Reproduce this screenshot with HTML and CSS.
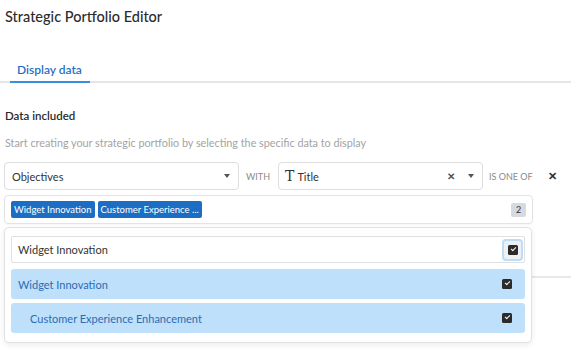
FILE: index.html
```html
<!DOCTYPE html>
<html lang="en">
<head>
    <meta charset="UTF-8">
    <meta name="viewport" content="width=device-width, initial-scale=1.0">
    <title>Strategic Portfolio Editor</title>
    <link rel="stylesheet" href="styles.css">
</head>
<body>
    <div class="page">
        <!-- header -->
        <h1 class="page-title">Strategic Portfolio Editor</h1>

        <!-- tabs -->
        <div class="tabs">
            <div class="tab tab-active">Display data</div>
        </div>

        <!-- data section -->
        <div class="section">
            <h2 class="section-title">Data included</h2>
            <p class="section-desc">Start creating your strategic portfolio by selecting the specific data to display</p>

            <div class="filter">
                <div class="filter-row">
                    <div class="select select-entity">
                        <span class="select-value">Objectives</span>
                        <span class="caret"></span>
                    </div>
                    <span class="op-label">WITH</span>
                    <div class="select select-field">
                        <span class="field-icon">T</span>
                        <span class="select-value">Title</span>
                        <span class="clear">&#x2715;</span>
                        <span class="caret"></span>
                    </div>
                    <span class="op-label op-oneof">IS ONE OF</span>
                    <span class="remove">&#x2715;</span>
                </div>

                <div class="tag-box">
                    <span class="tag">Widget Innovation</span>
                    <span class="tag">Customer Experience ...</span>
                    <span class="count">2</span>
                </div>

                <div class="divider"></div>

                <!-- dropdown -->
                <div class="dropdown">
                    <div class="search">
                        <span class="search-value">Widget Innovation</span>
                        <span class="check-wrap"><span class="check"></span></span>
                    </div>
                    <div class="option">
                        <span>Widget Innovation</span>
                        <span class="check"></span>
                    </div>
                    <div class="option option-child">
                        <span>Customer Experience Enhancement</span>
                        <span class="check"></span>
                    </div>
                </div>
            </div>
        </div>
    </div>
</body>
</html>
```

FILE: styles.css
```css
* {
    margin: 0;
    padding: 0;
    box-sizing: border-box;
}

body {
    background: #ffffff;
    font-family: Lato, 'Open Sans', sans-serif;
    color: #333;
}

.page {
    min-height: 100vh;
    padding-top: 8px;
}

/* header */
.page-title {
    font-size: 14.5px;
    line-height: 18px;
    font-weight: 500;
    padding-left: 5px;
    color: #2c2c2c;
}

/* tabs */
.tabs {
    display: flex;
    margin-top: 36px;
    padding-left: 10px;
    border-bottom: 2px solid #e6e6e6;
}

.tab {
    font-size: 12px;
    line-height: 16px;
    font-weight: 600;
    padding: 0 7px 3px;
    margin-bottom: -2px;
    color: #1f6fc5;
}

.tab-active {
    border-bottom: 2px solid #3b8de0;
    width: 80px;
}

/* section */
.section {
    padding: 0 4px;
}

.section-title {
    font-size: 11.5px;
    line-height: 14px;
    font-weight: 600;
    margin-top: 26px;
    padding-left: 1px;
    color: #2a2a2a;
}

.section-desc {
    font-size: 10.8px;
    line-height: 14px;
    margin-top: 13px;
    padding-left: 1px;
    color: #a3a3a3;
}

.filter {
    position: relative;
    margin-top: 12px;
}

.filter-row {
    display: flex;
    align-items: center;
    height: 28px;
}

.select {
    display: flex;
    align-items: center;
    height: 28px;
    border: 1px solid #dedede;
    border-radius: 4px;
    padding: 0 7px;
    font-size: 11px;
}

.select-entity {
    width: 235px;
}

.select-field {
    width: 205px;
    padding-left: 6px;
}

.select-value {
    flex: 1;
    color: #333;
}

.caret {
    width: 0;
    height: 0;
    border-left: 3.5px solid transparent;
    border-right: 3.5px solid transparent;
    border-top: 4px solid #555;
    margin-right: 1px;
}

.field-icon {
    font-family: 'DejaVu Serif', serif;
    font-size: 14px;
    font-weight: 400;
    margin-right: 3px;
    color: #333;
}

.clear {
    font-size: 10px;
    font-weight: 700;
    color: #555;
    margin-right: 13px;
}

.op-label {
    font-size: 9px;
    color: #8a8a8a;
    margin: 0 8px 0 7px;
}

.op-oneof {
    margin: 0 0 0 6px;
}

.remove {
    font-size: 11px;
    font-weight: 700;
    color: #333;
    margin-left: 15px;
}

/* selected tags */
.tag-box {
    display: flex;
    align-items: center;
    gap: 3px;
    width: 529px;
    height: 29px;
    margin-top: 5px;
    padding: 0 6px;
    border: 1px solid #e3e3e3;
    border-radius: 4px;
    box-shadow: 0 1px 2px rgba(0,0,0,0.04);
}

.tag {
    height: 17px;
    line-height: 17px;
    padding: 0 3px;
    border-radius: 2px;
    background: #1b6ec4;
    color: #fff;
    font-size: 9.5px;
}

.count {
    margin-left: auto;
    width: 15px;
    height: 14px;
    line-height: 14px;
    text-align: center;
    border-radius: 2px;
    background: #d6d9dd;
    font-size: 9px;
    color: #333;
}

.divider {
    margin-top: 52px;
    height: 2px;
    background: #e8e8e8;
    margin-right: -4px;
}

/* dropdown */
.dropdown {
    position: absolute;
    top: 65px;
    left: 0;
    width: 528px;
    padding: 8px 6px 9px;
    background: #fff;
    border: 1px solid #e2e2e2;
    border-radius: 5px;
    box-shadow: 0 2px 6px rgba(0,0,0,0.08);
    display: flex;
    flex-direction: column;
    gap: 4px;
}

.search {
    display: flex;
    align-items: center;
    justify-content: space-between;
    height: 27px;
    padding: 0 7px 0 6px;
    border: 1px solid #e0e0e0;
    border-radius: 2px;
    font-size: 11px;
    margin-bottom: 2px;
}

.search-value {
    color: #333;
}

.check-wrap {
    display: flex;
    align-items: center;
    justify-content: center;
    width: 21px;
    height: 22px;
    margin-right: -6px;
    border: 2px solid #bcdcf7;
    border-radius: 4px;
    background: #eef0f2;
}

.check {
    position: relative;
    display: inline-block;
    width: 10px;
    height: 10px;
    border-radius: 1.5px;
    background: #2b2b2b;
}

.check::after {
    content: "";
    position: absolute;
    left: 3px;
    top: 2px;
    width: 4px;
    height: 2px;
    border-left: 1.5px solid #fff;
    border-bottom: 1.5px solid #fff;
    transform: rotate(-45deg);
}

.option {
    display: flex;
    align-items: center;
    justify-content: space-between;
    height: 30px;
    padding: 0 13px 0 7px;
    border-radius: 3px;
    background: #bfe0fa;
    color: #2b6cb3;
    font-size: 11px;
}

.option-child {
    padding-left: 19px;
}
```
